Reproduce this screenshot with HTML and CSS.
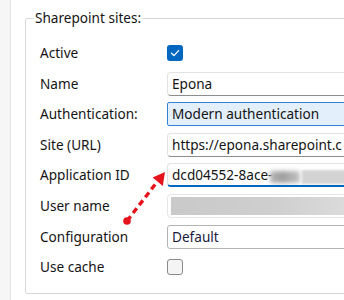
FILE: index.html
```html
<!DOCTYPE html>
<html>
<head>
  <meta charset="UTF-8">
  <title>Sharepoint sites</title>
  <link rel="stylesheet" href="styles.css">
</head>
<body>
  <div class="panel">
    <fieldset class="group">
      <legend>Sharepoint sites:</legend>
      <div class="form">
        <label>Active</label>
        <span class="check on">
          <svg viewBox="0 0 16 16" width="16" height="16"><path d="M4.5 8.2 L7 10.6 L11.6 5.6" fill="none" stroke="#fff" stroke-width="1.3" stroke-linecap="round" stroke-linejoin="round"/></svg>
        </span>

        <label>Name</label>
        <div class="field">Epona</div>

        <label>Authentication:</label>
        <div class="field select">Modern authentication</div>

        <label>Site (URL)</label>
        <div class="field">https://epona.sharepoint.c</div>

        <label>Application ID</label>
        <div class="field focus">dcd04552-8ace-<span class="smudge"></span><span class="smudge light"></span></div>

        <label>User name</label>
        <div class="field hidden"><span class="blur"></span></div>

        <label>Configuration</label>
        <div class="field combo">Default</div>

        <label>Use cache</label>
        <span class="check"></span>
      </div>
    </fieldset>
  </div>

  <!-- red pointer drawn over the form -->
  <svg class="arrow" width="344" height="300" viewBox="0 0 344 300">
    <line x1="127" y1="221" x2="157" y2="182" stroke="#e5141c" stroke-width="3.4" stroke-dasharray="6 4"/>
    <polygon points="165,172 162.8,186 152.6,177.6" fill="#e5141c"/>
    <circle cx="127" cy="221" r="3.8" fill="#e5141c"/>
  </svg>
</body>
</html>
```

FILE: styles.css
```css
/* Reset & basic styling */
* { box-sizing: border-box; }
html, body {
  margin: 0;
  height: 100%;
}
body {
  font-family: "Noto Sans", "Open Sans", sans-serif;
  font-size: 13.6px;
  color: #141414;
  background: #f6f6f6;
  position: relative;
  overflow: hidden;
}
/* White page next to the nav strip */
.panel {
  margin-left: 10px;
  height: 300px;
  border-left: 1px solid #e4e4e4;
  background: #fff;
  padding: 9px 0 0 14px;
  overflow: hidden;
}
.group {
  margin: 0;
  width: 420px;
  height: 285px;
  border: 1px solid #d8d8d8;
  border-radius: 2px;
  padding: 14px 0 0 14px;
}
.group legend {
  margin-left: -6px;
  padding: 0 1px;
  line-height: 18px;
}
.form {
  display: grid;
  grid-template-columns: 127px 200px;
  grid-auto-rows: 24px;
  row-gap: 6.6px;
  align-items: center;
}
.form label {
  line-height: 24px;
  white-space: nowrap;
}
/* Checkboxes */
.check {
  display: block;
  width: 16px;
  height: 16px;
  border: 1px solid #8a8a8a;
  border-radius: 3px;
  background: #f4f4f4;
}
.check.on {
  border: none;
  background: #0067c0;
}
.check svg { display: block; }
/* Text boxes */
.field {
  height: 24px;
  line-height: 22px;
  padding: 0 4px;
  border: 1px solid #e2e2e2;
  border-bottom-color: #8d8d8d;
  border-radius: 4px;
  background: #fff;
  white-space: nowrap;
  overflow: hidden;
}
.field.select {
  background: #e3effa;
  border-color: #2f83d8;
  border-radius: 2px;
}
.field.focus {
  border-bottom: 2px solid #0067c0;
}
.field.combo {
  border-color: #b4b4b4;
  border-radius: 3px;
  color: #1a1a3c;
}
.field.hidden {
  padding: 2px 0 2px 3px;
  border-color: #e6e6e6;
}
/* Redacted bits */
.smudge {
  display: inline-block;
  vertical-align: middle;
  width: 30px;
  height: 12px;
  margin-left: -2px;
  background: linear-gradient(90deg, #b8b8b8, #9e9e9e 40%, #c4c4c4);
  filter: blur(2px);
}
.smudge.light {
  width: 60px;
  height: 14px;
  margin-left: 2px;
  background: #d3d3d3;
  filter: blur(1px);
}
.blur {
  display: block;
  height: 100%;
  background: linear-gradient(90deg, #c9c9c9, #cfcfcf 55%, #dfdfdf);
  filter: blur(0.6px);
}
.arrow {
  position: absolute;
  top: 0;
  left: 0;
  pointer-events: none;
}
```
